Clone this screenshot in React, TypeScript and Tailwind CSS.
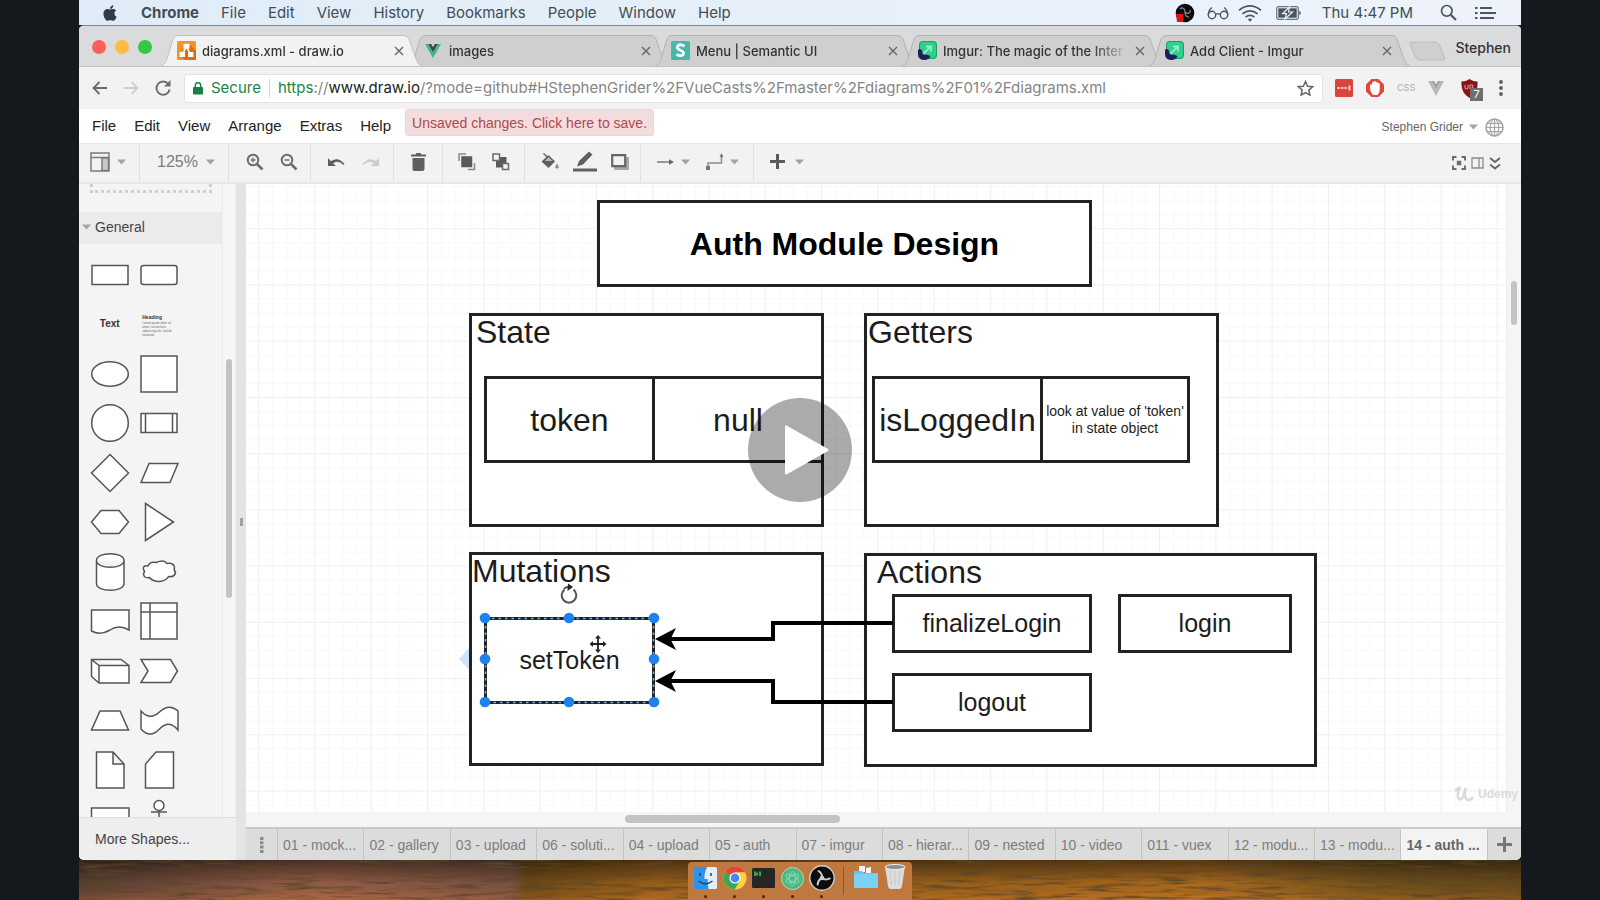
import React from "react";
import { FaApple } from "react-icons/fa";

const ui = "font-['Inter','Roboto',sans-serif]";
const helv = "font-['Liberation_Sans','Arial',sans-serif]";

function Caret({ className = "" }: { className?: string }) {
  return (
    <svg width="9" height="6" viewBox="0 0 9 6" className={className} aria-hidden="true">
      <path d="M0 0.5h9L4.5 5.5z" fill="#a3a3a3" />
    </svg>
  );
}

/* ---------- macOS menu bar ---------- */

function MenuBar() {
  const items = ["File", "Edit", "View", "History", "Bookmarks", "People", "Window", "Help"];
  return (
    <header
      className={`${ui} flex h-[25px] shrink-0 items-center justify-between bg-linear-to-r from-[#dfecf7] to-[#eef3fb] text-[15px] leading-5 text-[#444c55]`}
    >
      <nav aria-label="System menu" className="flex items-center gap-[22px] pl-[22px]">
        <FaApple size={18} color="#2f3b45" />
        <button type="button" className="font-bold">Chrome</button>
        {items.map((i) => (
          <button type="button" key={i}>{i}</button>
        ))}
      </nav>
      <div className="flex items-center pr-[25px]">
        <svg width="20" height="20" viewBox="0 0 20 20" aria-hidden="true">
          <circle cx="10" cy="10" r="9.3" fill="#0b0b0b" />
          <path d="M5 6c2-2 5-1 5 3M15 7c1 3-2 4.500-5 2M10 9c0 3 1 5 4 5" fill="none" stroke="#8d8d8d" strokeWidth="1.200" />
          <path d="M1 11h7v8H2z" fill="#e60f1d" />
        </svg>
        <svg width="22" height="14" viewBox="0 0 22 14" fill="none" stroke="#4d5760" strokeWidth="1.400" className="ml-3" aria-hidden="true">
          <circle cx="5" cy="9" r="3.700" />
          <circle cx="17" cy="9" r="3.700" />
          <path d="M8.700 8.500q2.300-1.800 4.600 0M1.300 9Q1.500 4 5 1.500M20.700 9Q20.500 4 17 1.500" />
        </svg>
        <svg width="24" height="18" viewBox="0 0 24 18" fill="none" stroke="#4d5760" strokeWidth="1.700" className="ml-[9px]" aria-hidden="true">
          <path d="M1 6.300Q12-2.500 23 6.300M4.300 9.800q7.700-6 15.400 0M7.600 13q4.400-3.300 8.800 0" />
          <path d="M9.800 15.300q2.200-1.500 4.400 0L12 17.800z" fill="#4d5760" stroke="none" />
        </svg>
        <svg width="26" height="14" viewBox="0 0 26 14" className="ml-[14px]" aria-hidden="true">
          <rect x="0.700" y="0.700" width="21.600" height="12.600" rx="2" fill="none" stroke="#6a747d" strokeWidth="1.200" />
          <rect x="2.300" y="2.300" width="18.400" height="9.400" fill="#4a545d" />
          <path d="M13.500 1L6.500 7.700h4L9 13l7.500-7h-4z" fill="#4a545d" stroke="#e9f0f8" strokeWidth="1.200" />
          <path d="M23.300 4.500q3 2.500 0 5z" fill="#4d5760" />
        </svg>
        <time className="ml-[20px] text-[15px]">Thu 4:47 PM</time>
        <svg width="17" height="17" viewBox="0 0 17 17" fill="none" stroke="#4d5760" strokeWidth="1.700" className="ml-[27px]" aria-hidden="true">
          <circle cx="6.800" cy="6.800" r="5.300" />
          <path d="M10.700 10.700L16 16" strokeWidth="2.200" />
        </svg>
        <svg width="21" height="14" viewBox="0 0 21 14" stroke="#4d5760" strokeWidth="2" className="ml-[18px]" aria-hidden="true">
          <path d="M5 2h12M5 7h16M5 12h14M0 2h2.500M0 7h2.500M0 12h2.500" />
        </svg>
      </div>
    </header>
  );
}

/* ---------- Browser chrome ---------- */

const DrawioIcon = (
  <svg width="19" height="19" viewBox="0 0 19 19" aria-hidden="true">
    <rect width="19" height="19" rx="1.500" fill="#f0932b" />
    <path d="M12 3l7 7v9H8l-5-4z" fill="#df6c0c" />
    <path d="M9.500 6L5.500 13M9.500 6l4 7" stroke="#fff" strokeWidth="1.500" />
    <rect x="6.500" y="2.800" width="6" height="5" rx="0.500" fill="#fff" />
    <rect x="2.600" y="11" width="5.400" height="5" rx="0.500" fill="#fff" />
    <rect x="11" y="11" width="5.400" height="5" rx="0.500" fill="#fff" />
  </svg>
);
const VueIcon = (
  <svg width="19" height="14" viewBox="-1 0 19 14" aria-hidden="true">
    <path d="M0 0h3.200L8 8.300 12.800 0H16L8 14z" fill="#41b883" />
    <path d="M3.200 0H6.200L8 3.200 9.800 0h3L8 8.300z" fill="#35495e" />
  </svg>
);
const SemanticIcon = (
  <svg width="19" height="19" viewBox="0 0 19 19" aria-hidden="true">
    <rect width="19" height="19" rx="1.500" fill="#45b8ac" />
    <path d="M13.600 5.200Q9.500 2.600 6.900 4.800 4.900 7.400 9.300 9.200q4.600 1.900 2.700 4.600-2.300 2-6.600-.4" fill="none" stroke="#fff" strokeWidth="2.800" />
  </svg>
);
const ImgurIcon = (
  <svg width="19" height="19" viewBox="0 0 19 19" aria-hidden="true">
    <rect x="1" width="18" height="18" rx="4" fill="#2fd08c" />
    <rect x="1.500" y="0.500" width="17" height="17" rx="3.500" fill="none" stroke="#1d9a68" />
    <path d="M0 8.500q3-1.500 4 1l.5 3q1 2 4 1l4 1.500q-1 3.500-5.500 4Q0 19 0 13z" fill="#1f1d5c" />
    <path d="M5.500 12.500l7-6.500M8 5.500h5v5" fill="none" stroke="#8ef0c4" strokeWidth="1.800" />
  </svg>
);

const browserTabs = [
  { title: "diagrams.xml - draw.io", icon: DrawioIcon },
  { title: "images", icon: VueIcon },
  { title: "Menu | Semantic UI", icon: SemanticIcon },
  { title: "Imgur: The magic of the Inter", icon: ImgurIcon },
  { title: "Add Client - Imgur", icon: ImgurIcon },
];

function BrowserTab({ title, icon, active }: { title: string; icon: React.ReactNode; active: boolean }) {
  return (
    <div className={`relative -ml-[14px] flex h-[31px] w-[261px] items-center pr-[18px] pl-4 ${active ? "z-10" : ""}`}>
      <svg className="absolute inset-0 h-full w-full" viewBox="0 0 261 31" preserveAspectRatio="none" aria-hidden="true">
        <path
          d="M0 31C4 30 4 28 6 24L12 4Q13.500 0.500 17 0.500H243Q246.500 0.500 248 4L255 24Q257 30 261 31"
          fill={active ? "#f2f2f2" : "#cfcfcf"}
          stroke={active ? "#c0c0c0" : "#b2b2b2"}
        />
      </svg>
      <button type="button" className="relative flex min-w-0 flex-1 items-center gap-[6px] text-left">
        <span className="shrink-0">{icon}</span>
        <span className="flex-1 mask-r-from-80% mask-r-to-100% text-[13px] leading-5 font-medium whitespace-nowrap text-[#333]">
          {title}
        </span>
      </button>
      <button type="button" aria-label={`Close ${title}`} className="relative ml-[6px]">
        <svg width="10" height="10" viewBox="0 0 10 10" stroke="#666" strokeWidth="1.400">
          <path d="M1 1l8 8M9 1L1 9" />
        </svg>
      </button>
    </div>
  );
}

function TabStrip() {
  return (
    <div className={`${ui} flex h-[41px] shrink-0 items-end border-b border-[#c4c4c4] bg-[#d9dbdc]`}>
      <div className="flex h-full w-[96px] shrink-0 items-center gap-[9px] pt-[2px] pl-[13px]">
        <button type="button" aria-label="Close window" className="size-[14px] rounded-full bg-[#fc605c]" />
        <button type="button" aria-label="Minimise window" className="size-[14px] rounded-full bg-[#fdbc40]" />
        <button type="button" aria-label="Zoom window" className="size-[14px] rounded-full bg-[#34c749]" />
      </div>
      {browserTabs.map((t, i) => (
        <BrowserTab key={i} title={t.title} icon={t.icon} active={i === 0} />
      ))}
      <button type="button" aria-label="New tab" className="-ml-[2px] self-center pt-[10px]">
        <svg width="38" height="20" viewBox="0 0 38 20">
          <path d="M3 1h24q3 0 4.500 3l5 12q1 3-2 3H12q-3 0-4.500-3L2 3Q1.500 1 3 1z" fill="#cfcfcf" stroke="#bdbdbd" />
        </svg>
      </button>
      <button type="button" className="mr-[10px] ml-auto self-center pt-1 text-sm font-medium text-[#333]">Stephen</button>
    </div>
  );
}

function AddressBar() {
  return (
    <div className={`${ui} flex h-[42px] shrink-0 items-center bg-[#f2f2f2] pr-[18px]`}>
      <button type="button" aria-label="Back" className="ml-[13px]">
        <svg width="15" height="14" viewBox="0 0 15 14" fill="none" stroke="#6b6b6b" strokeWidth="1.800"><path d="M15 7H1.500M7.500 1l-6 6 6 6" /></svg>
      </button>
      <button type="button" aria-label="Forward" className="ml-[17px]">
        <svg width="15" height="14" viewBox="0 0 15 14" fill="none" stroke="#cfcfcf" strokeWidth="1.800"><path d="M0 7h13.500M7.500 1l6 6-6 6" /></svg>
      </button>
      <button type="button" aria-label="Reload" className="ml-4">
        <svg width="16" height="16" viewBox="0 0 16 16" fill="none" stroke="#6b6b6b" strokeWidth="1.900">
          <path d="M13.300 4A6.600 6.600 0 1 0 14.600 9.500" />
          <path d="M15.500 0v6.500H9z" fill="#6b6b6b" stroke="none" />
        </svg>
      </button>
      <div className="ml-[13px] flex h-[29px] flex-1 items-center rounded-[3px] border border-[#e2e2e2] bg-white pr-2 pl-2 text-[15px] leading-5">
        <svg width="10" height="13" viewBox="0 0 10 13" aria-hidden="true">
          <rect y="5" width="10" height="7.500" rx="0.800" fill="#1b7f43" />
          <path d="M2.300 5.500V3.500a2.700 2.700 0 0 1 5.400 0v2" fill="none" stroke="#1b7f43" strokeWidth="1.400" />
        </svg>
        <span className="ml-2 text-[#1b8548]">Secure</span>
        <span className="mx-2 h-[18px] w-px bg-[#d5d5d5]" />
        <div role="textbox" aria-label="Address" className="flex-1 whitespace-nowrap text-[#858585]">
          <span className="text-[#1b8548]">https</span>://<span className="text-[#222]">www.draw.io</span>
          /?mode=github#HStephenGrider%2FVueCasts%2Fmaster%2Fdiagrams%2F01%2Fdiagrams.xml
        </div>
        <button type="button" aria-label="Bookmark this page">
          <svg width="17" height="16" viewBox="0 0 17 16" fill="none" stroke="#666" strokeWidth="1.500">
            <path d="M8.500 1.500l2.100 4.700 5 .5-3.800 3.400 1.100 5-4.400-2.600-4.400 2.600 1.100-5L1.400 6.700l5-.5z" />
          </svg>
        </button>
      </div>
      <div className="ml-3 flex items-center gap-[13px]">
        <button type="button" aria-label="Password manager">
          <svg width="18" height="18" viewBox="0 0 18 18"><rect width="18" height="18" rx="1.500" fill="#d8453e" /><path d="M2.500 9h2.300M6 9h2.300M9.500 9h2.300M14.500 6.500v5" stroke="#fff" strokeWidth="1.600" /></svg>
        </button>
        <button type="button" aria-label="Content blocker">
          <svg width="18" height="18" viewBox="0 0 18 18">
            <path d="M5.500 0h7L18 5.500v7L12.500 18h-7L0 12.500v-7z" fill="#e2463c" />
            <path d="M4 6q1-1.500 2 0V3.500q1-1.300 1.800 0V2.500q1-1.200 2 0v1q1-1 2 0v1q1-1 1.900 0V11q0 3-2.500 5H7Q4 13 4 9z" fill="#fff" />
          </svg>
        </button>
        <button type="button" className="w-[18px] text-[9px] leading-4 font-medium text-[#b5b5b5]">CSS</button>
        <button type="button" aria-label="Vue devtools">
          <svg width="16" height="15" viewBox="0 0 16 15"><path d="M0 0h3.200L8 8.300 12.800 0H16L8 15z" fill="#b8b8b8" /><path d="M3.200 0H6.200L8 3.200 9.800 0h3L8 8.300z" fill="#a2a2a2" /></svg>
        </button>
        <button type="button" aria-label="Ad blocker, 7 blocked" className="relative ml-1">
          <svg width="17" height="19" viewBox="0 0 17 19"><path d="M8.500 0Q12 2.500 16.500 2.500 17.500 14 8.500 19-.5 14 .5 2.500 5 2.500 8.500 0z" fill="#8a1518" /><path d="M4 6v3q1.500 2 3 0V6M9 10V6h2.500q1.500 2-1 3" fill="none" stroke="#d98c8c" strokeWidth="1.200" /></svg>
          <span className="absolute top-[9px] left-[9px] h-[13px] w-[13px] bg-[#6e6e6e] text-[11px] leading-[13px] text-white">7</span>
        </button>
        <button type="button" aria-label="Browser menu" className="ml-2">
          <svg width="4" height="16" viewBox="0 0 4 16" fill="#5f5f5f"><circle cx="2" cy="2" r="1.900" /><circle cx="2" cy="8" r="1.900" /><circle cx="2" cy="14" r="1.900" /></svg>
        </button>
      </div>
    </div>
  );
}

/* ---------- draw.io ---------- */

function AppMenu() {
  return (
    <div className="flex h-[34px] shrink-0 items-center bg-white">
      <nav aria-label="Editor menu" className="flex gap-[18px] pl-[13px] text-[15px] leading-5 text-[#222]">
        {["File", "Edit", "View", "Arrange", "Extras", "Help"].map((m) => (
          <button type="button" key={m}>{m}</button>
        ))}
      </nav>
      <button type="button" className="ml-[14px] h-[27px] self-start rounded-[3px] border border-[#f0d2d4] bg-[#f3dcde] px-[6px] text-[14px] leading-5 text-[#b0484c]">
        Unsaved changes. Click here to save.
      </button>
      <button type="button" className="ml-auto flex items-center gap-[6px] pt-[2px] text-[12px] leading-5 text-[#666]">
        Stephen Grider
        <Caret />
      </button>
      <button type="button" aria-label="Language" className="mr-[17px] ml-[7px] pt-[2px]">
        <svg width="19" height="19" viewBox="0 0 19 19" fill="none" stroke="#a6a6a6" strokeWidth="1.200">
          <circle cx="9.500" cy="9.500" r="8.500" strokeWidth="1.600" />
          <ellipse cx="9.500" cy="9.500" rx="4.300" ry="8.500" />
          <path d="M9.500 1v17M1 9.500h17M2.500 5.300h14M2.500 13.700h14" />
        </svg>
      </button>
    </div>
  );
}

function Tool({ label, children, className = "" }: { label: string; children: React.ReactNode; className?: string }) {
  return (
    <button type="button" aria-label={label} className={`flex items-center ${className}`}>
      {children}
    </button>
  );
}

function Magnifier({ plus }: { plus: boolean }) {
  return (
    <svg width="18" height="18" viewBox="0 0 18 18" fill="none" stroke="#6e6e6e">
      <circle cx="7" cy="7" r="5.300" strokeWidth="2" />
      <path d="M11 11l5.500 5.500" strokeWidth="2.600" />
      <path d={plus ? "M4.500 7h5M7 4.500v5" : "M4.500 7h5"} strokeWidth="1.300" />
    </svg>
  );
}

function Toolbar() {
  const group = "flex h-full items-center border-r border-[#e0e0e0] pb-[3px]";
  return (
    <div role="toolbar" className="flex h-[41px] shrink-0 items-center border-t border-b-2 border-t-[#e6e6e6] border-b-[#e6e6e6] bg-[#f2f2f2]">
      <div className={`${group} w-[61px] pl-[11px]`}>
        <Tool label="View layout" className="gap-[7px]">
          <svg width="20" height="20" viewBox="0 0 20 20" fill="none" stroke="#7b7b7b" strokeWidth="1.500">
            <path d="M1 1h18v18H1zM1 5.500h18" /><path d="M12 6h6.500v12.500H12z" fill="#c9c9c9" />
          </svg>
          <Caret />
        </Tool>
      </div>
      <div className={`${group} w-[89px] pl-[17px]`}>
        <button type="button" className="flex items-center gap-2 text-base leading-5 text-[#7d7d7d]">
          125%
          <Caret />
        </button>
      </div>
      <div className={`${group} w-[82px] gap-4 pl-[17px]`}>
        <Tool label="Zoom in"><Magnifier plus /></Tool>
        <Tool label="Zoom out"><Magnifier plus={false} /></Tool>
      </div>
      <div className={`${group} w-[83px] gap-[17px] pl-4`}>
        <Tool label="Undo">
          <svg width="18" height="10" viewBox="0 0 18 10"><path d="M1 1v8h8L6 6.300Q11 2.500 16.500 8L17.500 7Q11-1 4 4.300z" fill="#5f5f5f" /></svg>
        </Tool>
        <Tool label="Redo">
          <svg width="18" height="10" viewBox="0 0 18 10"><path d="M17 1v8H9l3-2.700Q7 2.500 1.500 8L.5 7Q7-1 14 4.300z" fill="#cbcbcb" /></svg>
        </Tool>
      </div>
      <div className={`${group} w-[49px] justify-center`}>
        <Tool label="Delete">
          <svg width="15" height="18" viewBox="0 0 15 18" fill="#5f5f5f"><path d="M0 1.500h4.500L5.500 0h4l1 1.500H15V3.500H0zM1.500 5h12v11q0 2-2 2h-8q-2 0-2-2z" /></svg>
        </Tool>
      </div>
      <div className={`${group} w-[82px] gap-4 pl-[15px]`}>
        <Tool label="To front">
          <svg width="18" height="18" viewBox="0 0 18 18" fill="none" stroke="#8a8a8a" strokeWidth="1.500"><path d="M1 8V1h7M10 16.500h6.500V10" /><path d="M4 4h9.500v9.500H4z" fill="#5a5a5a" stroke="#5a5a5a" /></svg>
        </Tool>
        <Tool label="To back">
          <svg width="18" height="18" viewBox="0 0 18 18" strokeWidth="1.500"><path d="M4 4h10.500v10.500H4z" fill="#5a5a5a" /><path d="M1 1h6.500v6.500H1zM10.500 10.500h6v6h-6z" fill="#f2f2f2" stroke="#6b6b6b" /></svg>
        </Tool>
      </div>
      <div className={`${group} w-[116px] gap-[14px] pl-4`}>
        <Tool label="Fill colour">
          <svg width="18" height="17" viewBox="0 0 18 17"><path d="M2.500 0.500l6 5.500" stroke="#666" strokeWidth="1.400" /><path d="M7.500 2l6.500 6.500L7.500 15 .5 8.500z" fill="#5f5f5f" /><path d="M7.500 4L4 8h7.500z" fill="#b9b9b9" /><path d="M16 10.500q3.300 5 0 5t0-5z" fill="#8d8d8d" /></svg>
        </Tool>
        <Tool label="Line colour">
          <svg width="24" height="21" viewBox="0 0 24 21" fill="#606060"><path d="M0 17.500h24v3H0zM4 15.500l2-5.500L16 .5l3.500 3L10 13.500z" /></svg>
        </Tool>
        <Tool label="Shadow">
          <svg width="18" height="16" viewBox="0 0 18 16"><path d="M3 3h15v13H3z" fill="#a9a9a9" /><path d="M1.200 1.200h13v11h-13z" fill="#f2f2f2" stroke="#666" strokeWidth="2.200" /></svg>
        </Tool>
      </div>
      <div className={`${group} w-[113px] gap-4 pl-4`}>
        <Tool label="Connection" className="gap-[7px]">
          <svg width="17" height="8" viewBox="0 0 17 8"><path d="M0 4h13" stroke="#777" strokeWidth="1.400" /><path d="M12 1.200L17 4l-5 2.800z" fill="#666" /></svg>
          <Caret />
        </Tool>
        <Tool label="Waypoints" className="gap-[6px]">
          <svg width="18" height="18" viewBox="0 0 18 18"><path d="M2 16v-6h13.500V3" fill="none" stroke="#8a8a8a" strokeWidth="1.500" /><path d="M0 13h4v4H0zM13.500 4l2-4 2 4z" fill="#777" /></svg>
          <Caret />
        </Tool>
      </div>
      <Tool label="Insert" className="ml-4 gap-[10px] pb-[3px]">
        <svg width="15" height="15" viewBox="0 0 15 15" stroke="#5a5a5a" strokeWidth="3"><path d="M0 7.500h15M7.500 0v15" /></svg>
        <Caret />
      </Tool>
      <div className="mr-5 ml-auto flex items-center gap-[5px]">
        <Tool label="Fullscreen">
          <svg width="14" height="14" viewBox="0 0 14 14" fill="none" stroke="#6b6b6b" strokeWidth="2"><path d="M1 4.500V1h3.500M9.500 1H13v3.500M13 9.500V13H9.500M4.500 13H1V9.500" /><path d="M4.800 4.800h4.400v4.400H4.800z" fill="#6b6b6b" stroke="none" /></svg>
        </Tool>
        <Tool label="Format panel">
          <svg width="13" height="12" viewBox="0 0 13 12" fill="none" stroke="#8a8a8a" strokeWidth="1.300"><path d="M1 1h11v10H1zM8 1v10" /></svg>
        </Tool>
        <Tool label="Collapse">
          <svg width="12" height="13" viewBox="0 0 12 13" fill="none" stroke="#666" strokeWidth="1.800"><path d="M1 1l5 4 5-4M1 7.500l5 4 5-4" /></svg>
        </Tool>
      </div>
    </div>
  );
}

/* Palette outlines, each drawn in a 40x40 box. */
const paletteShapes: { name: string; draw: React.ReactNode }[] = [
  { name: "Rectangle", draw: <rect x="2" y="10.500" width="36" height="19" /> },
  { name: "Rounded rectangle", draw: <rect x="2" y="10.500" width="36" height="19" rx="2.500" /> },
  { name: "Text", draw: null },
  { name: "Textbox", draw: null },
  { name: "Ellipse", draw: <ellipse cx="20" cy="20" rx="18.300" ry="12.300" /> },
  { name: "Square", draw: <rect x="2" y="2" width="36" height="36" /> },
  { name: "Circle", draw: <circle cx="20" cy="20" r="18.300" /> },
  { name: "Process", draw: <path d="M2 10.500h36v19H2zM6.500 10.500v19M33.500 10.500v19" /> },
  { name: "Diamond", draw: <path d="M20 1.500L38.500 20 20 38.500 1.500 20z" /> },
  { name: "Parallelogram", draw: <path d="M10 10.500h29L31 29.500H2z" /> },
  { name: "Hexagon", draw: <path d="M11 8.500h18L38.500 20 29 31.500H11L1.500 20z" /> },
  { name: "Triangle", draw: <path d="M6.500 1.500L34.500 20l-28 18.500z" /> },
  { name: "Cylinder", draw: <path d="M6.500 8.500c0-9 27.500-9 27.500 0v23c0 9-27.500 9-27.500 0zc0 9 27.500 9 27.500 0" /> },
  { name: "Cloud", draw: <path d="M9 14q2-5 8-3.500 8-3.500 11 1 7-1 7.500 4-1 2 1 5-1 5-7 4-2 4-9 5-7 0-10-4-6 1-6-4 2-2 0-4-1-4.500 4.500-3.500z" /> },
  { name: "Document", draw: <path d="M1.500 9h37.500v20q-10-6-19 0-10 6-18.500 1z" /> },
  { name: "Internal storage", draw: <path d="M2 2h36v36H2zM2 11h36M11 2v36" /> },
  { name: "Cube", draw: <path d="M1.500 8.500H31L39 14.500V32H9L1.500 25.500zL9 14.500h30M9 14.500V32" /> },
  { name: "Step", draw: <path d="M2 8.500h29.500L38.500 20l-7 11.500H2L9 20z" /> },
  { name: "Trapezoid", draw: <path d="M10 11h20l8.500 19h-37z" /> },
  { name: "Tape", draw: <path d="M2 11q9 10 18.500 1t18.500-1v19q-9-11-18.500-1T2 29z" /> },
  { name: "Note", draw: <path d="M6.500 2H23l11 12v24H6.500zM23 2v12h11" /> },
  { name: "Card", draw: <path d="M17 2h17.500v36H6.500V14z" /> },
  { name: "Callout", draw: <path d="M1.500 9h37.500v20H1.500z" /> },
  { name: "Actor", draw: <path d="M12 13h16M20 11.500V28l-8 10M20 28l8 10M15 6.500a5 5 0 1 0 10 0a5 5 0 1 0-10 0" /> },
];

function Palette() {
  return (
    <aside className="flex w-[157px] shrink-0 flex-col bg-[#f4f4f4]">
      <div className="flex min-h-0 flex-1">
        <div className="flex-1 overflow-hidden">
          <div className="mr-[10px] ml-[11px] h-[9px] border-3 border-t-0 border-dotted border-[#cfcfcf]" />
          <button type="button" className="mt-[19px] flex h-8 w-full items-center gap-[4px] bg-[#ebebeb] pb-[2px] pl-[3px] text-sm leading-5 text-[#444]">
            <Caret />
            General
          </button>
          <div className="mt-[6px] ml-[6px] grid h-[594px] w-[99px] auto-rows-fr grid-cols-2">
            {paletteShapes.map((s) => (
              <button type="button" key={s.name} aria-label={s.name} className="flex items-center justify-center">
                {s.name === "Text" ? (
                  <span className="text-[10px] leading-4 font-bold text-[#333]">Text</span>
                ) : s.name === "Textbox" ? (
                  <span className="flex h-5 w-[34px] flex-col gap-px text-left">
                    <span className="text-[5px] leading-[6px] font-bold text-[#333]">Heading</span>
                    <span className="text-[3px] leading-[4px] text-[#666]">Lorem ipsum dolor sit amet, consectetur adipisicing elit, sed do eiusmod</span>
                  </span>
                ) : (
                  <svg width="40" height="40" viewBox="0 0 40 40" fill="#fff" stroke="#555" strokeWidth="1.500">{s.draw}</svg>
                )}
              </button>
            ))}
          </div>
        </div>
        <div className="w-[14px] border-x border-[#ececec] bg-[#f6f6f6] px-[3px] pt-[175px]">
          <div className="h-[239px] rounded-full bg-[#c3c3c3]" />
        </div>
      </div>
      <button type="button" className="h-[43px] shrink-0 border-t border-[#dedede] bg-[#eeeeee] pl-4 text-left text-sm leading-5 text-[#444]">
        More Shapes...
      </button>
    </aside>
  );
}

function Node({ className, children }: { className: string; children?: React.ReactNode }) {
  return (
    <div className={`absolute flex border-3 border-[#222] bg-white text-center text-[#1c1c1c] ${className}`}>{children}</div>
  );
}

const handles = [
  [239, 434], [323, 434], [408, 434], [239, 475], [408, 475], [239, 518], [323, 518], [408, 518],
];

function Canvas() {
  const box = "items-center justify-center";
  const title = "items-start leading-8 text-[32px]";
  return (
    <div className="relative min-w-0 flex-1 overflow-hidden bg-white">
      <svg className="absolute inset-0 h-full w-full" aria-hidden="true">
        <defs>
          <pattern id="grid" x="12.200" y="44.200" width="56.300" height="56.230" patternUnits="userSpaceOnUse">
            <path d="M14.500 0v56.300M28.600 0v56.300M42.700 0v56.300M0 14.500h56.300M0 28.600h56.300M0 42.700h56.300" stroke="#f8f8f8" />
            <path d="M0.500 0v56.300M0 0.500h56.300" stroke="#efefef" />
          </pattern>
        </defs>
        <rect width="100%" height="100%" fill="url(#grid)" />
        <path d="M213 475l11-12v24z" fill="#cfe3fb" />
      </svg>

      <Node className={`top-[16px] left-[351px] h-[87px] w-[495px] text-[32px] font-bold text-black ${box}`}>Auth Module Design</Node>

      <Node className={`top-[129px] left-[223px] h-[214px] w-[355px] pl-1 ${title}`}>State</Node>
      <Node className={`top-[192px] left-[238px] h-[87px] w-[171px] text-[32px] ${box}`}>token</Node>
      <Node className={`top-[192px] left-[406px] h-[87px] w-[172px] text-[32px] ${box}`}>null</Node>

      <Node className={`top-[129px] left-[618px] h-[214px] w-[355px] pl-px ${title}`}>Getters</Node>
      <Node className={`top-[192px] left-[626px] h-[87px] w-[171px] text-[32px] ${box}`}>isLoggedIn</Node>
      <Node className={`top-[192px] left-[794px] h-[87px] w-[150px] text-[14px] leading-[17px] ${box}`}>
        look at value of 'token'<br />in state object
      </Node>

      <Node className={`top-[368px] left-[223px] h-[214px] w-[355px] ${title}`}>Mutations</Node>
      <Node className={`top-[369px] left-[618px] h-[214px] w-[453px] pl-[10px] ${title}`}>Actions</Node>
      <Node className={`top-[410px] left-[646px] h-[59px] w-[200px] pt-px text-[25px] ${box}`}>finalizeLogin</Node>
      <Node className={`top-[410px] left-[872px] h-[59px] w-[174px] pt-px text-[25px] ${box}`}>login</Node>
      <Node className={`top-[489px] left-[646px] h-[59px] w-[200px] pt-px text-[25px] ${box}`}>logout</Node>
      <Node className={`top-[433px] left-[238px] h-[87px] w-[171px] pt-px text-[25px] ${box}`}>setToken</Node>

      <svg className="pointer-events-none absolute inset-0 h-full w-full" fill="none" aria-hidden="true">
        <g stroke="#000" strokeWidth="4">
          <path d="M647 439H527V455H424" />
          <path d="M647 518H527V497H424" />
        </g>
        <path d="M409 455l21-11-5.500 11 5.500 11zM409 497l21-11-5.500 11 5.500 11z" fill="#000" />
        <path d="M239.500 434.500h168v84h-168z" stroke="#6cb4ee" strokeWidth="1.600" strokeDasharray="2.500 4" />
        {handles.map(([x, y]) => (
          <circle key={`${x}-${y}`} cx={x} cy={y} r="5.300" fill="#1c82ee" />
        ))}
        <g stroke="#555" strokeWidth="2">
          <path d="M327.500 405.600a7.300 7.300 0 1 1-9 0" />
          <path d="M318 405q2-2.500 5-2" />
          <path d="M322 399.500l5 3.500-5.500 4z" fill="#222" stroke="none" />
        </g>
        <g stroke="#222" strokeWidth="1.800">
          <path d="M345 460h14M352 453v14" />
          <path d="M352 451l3 3.500h-6zM352 469l3-3.500h-6zM343.500 460l3.500-3v6zM360.500 460l-3.500-3v6z" fill="#222" stroke="none" />
        </g>
      </svg>
    </div>
  );
}

function Watermark() {
  return (
    <div className="absolute right-[3px] bottom-[8px] flex items-center gap-1 text-[#dadada]">
      <svg width="20" height="20" viewBox="0 0 20 20" fill="none" stroke="#d9d9d9" strokeWidth="2.500" aria-hidden="true">
        <path d="M1 7l5-4Q3 8 4 13q2 5 5 0l3-9M11 4q-1 12 3 12 3 0 5-3" />
      </svg>
      <span className="text-[12px] leading-4 font-bold">Udemy</span>
    </div>
  );
}

const pages = [
  "01 - mock...", "02 - gallery", "03 - upload", "06 - soluti...", "04 - upload", "05 - auth", "07 - imgur",
  "08 - hierar...", "09 - nested", "10 - video", "011 - vuex", "12 - modu...", "13 - modu...", "14 - auth ...",
];

function PageTabs() {
  return (
    <div className="flex h-[33px] shrink-0 border-t-2 border-[#c9c9c9] bg-[#dcdcdc]">
      <button type="button" aria-label="Pages" className="flex w-[32px] items-center justify-center border-r border-[#c2c2c2]">
        <svg width="4" height="16" viewBox="0 0 4 16" fill="#8a8a8a"><path d="M0 0h3.500v3H0zM0 4.300h3.500v3H0zM0 8.600h3.500v3H0zM0 12.900h3.500v3H0z" /></svg>
      </button>
      {pages.map((p, i) => (
        <button
          type="button"
          key={p}
          className={`min-w-0 flex-1 overflow-hidden border-r border-[#c2c2c2] pl-[5px] text-left text-sm leading-5 whitespace-nowrap ${
            i === pages.length - 1 ? "bg-[#f3f3f3] font-bold text-[#666]" : "text-[#7c7c7c]"
          }`}
        >
          {p}
        </button>
      ))}
      <button type="button" aria-label="Insert page" className="flex w-[33px] items-center justify-center">
        <svg width="15" height="15" viewBox="0 0 15 15" stroke="#777" strokeWidth="3"><path d="M0 7.500h15M7.500 0v15" /></svg>
      </button>
    </div>
  );
}

/* ---------- Dock ---------- */

const dockApps: { name: string; icon: React.ReactNode }[] = [
  {
    name: "Finder",
    icon: (
      <svg width="23" height="22" viewBox="0 0 23 22">
        <rect width="23" height="22" rx="1.500" fill="#e3edf7" />
        <path d="M0 0h13Q10 7 10.500 12h3q0 5 1 10H0z" fill="#2d92ea" />
        <path d="M6 6v3M17 6v3M4.500 14q7 5.500 14 0" fill="none" stroke="#17456f" strokeWidth="1.500" />
      </svg>
    ),
  },
  {
    name: "Chrome",
    icon: (
      <svg width="24" height="24" viewBox="0 0 24 24">
        <circle cx="12" cy="12" r="11.500" fill="#fcd03f" />
        <path d="M12 12L2 6.200A11.500 11.500 0 0 1 22 6.200H12z" fill="#e2463a" />
        <path d="M12 12L2 6.200A11.500 11.500 0 0 0 11.500 23.500L17 14.500z" fill="#3aa757" />
        <circle cx="12" cy="12" r="5.600" fill="#fff" />
        <circle cx="12" cy="12" r="4.400" fill="#4688f1" />
      </svg>
    ),
  },
  {
    name: "Terminal",
    icon: (
      <svg width="23" height="20" viewBox="0 0 23 20">
        <rect width="23" height="20" rx="1.500" fill="#262626" />
        <path d="M3 3.500v4.500M5 4.500v3M8 3.500v4.500" stroke="#2cc13a" strokeWidth="1.800" />
      </svg>
    ),
  },
  {
    name: "Atom",
    icon: (
      <svg width="23" height="23" viewBox="0 0 23 23" fill="none">
        <circle cx="11.500" cy="11.500" r="11" fill="#4fb985" stroke="#a8dcc2" />
        <g stroke="#8fd9b5" strokeWidth="1">
          <ellipse cx="11.500" cy="11.500" rx="3" ry="7" />
          <ellipse cx="11.500" cy="11.500" rx="3" ry="7" transform="rotate(60 11.500 11.500)" />
          <ellipse cx="11.500" cy="11.500" rx="3" ry="7" transform="rotate(120 11.500 11.500)" />
        </g>
      </svg>
    ),
  },
  {
    name: "OBS",
    icon: (
      <svg width="26" height="26" viewBox="0 0 26 26" fill="none">
        <circle cx="13" cy="13" r="12.200" fill="#0c0c0c" stroke="#cfcfcf" strokeWidth="1.400" />
        <g stroke="#cdcdcd" strokeWidth="2" strokeLinecap="round">
          <path d="M13 13Q13.500 8.500 9.500 6" />
          <path d="M13 13Q13.500 8.500 9.500 6" transform="rotate(120 13 13)" />
          <path d="M13 13Q13.500 8.500 9.500 6" transform="rotate(240 13 13)" />
        </g>
        <circle cx="13" cy="13" r="2.300" fill="#cdcdcd" />
      </svg>
    ),
  },
];

function Dock() {
  return (
    <div className="relative flex h-10 shrink-0 justify-center overflow-hidden">
      <svg className="absolute inset-0 h-full w-full" preserveAspectRatio="none" viewBox="0 0 1442 40" aria-hidden="true">
        <defs>
          <linearGradient id="sea">
            <stop offset="0" stopColor="#5d443a" />
            <stop offset="0.070" stopColor="#7d5242" />
            <stop offset="0.160" stopColor="#a4674f" />
            <stop offset="0.300" stopColor="#85594a" />
            <stop offset="0.310" stopColor="#7a5014" />
            <stop offset="0.400" stopColor="#a8691c" />
            <stop offset="0.600" stopColor="#a86a1c" />
            <stop offset="0.780" stopColor="#bb7420" />
            <stop offset="0.900" stopColor="#7c5a1c" />
            <stop offset="1" stopColor="#71501c" />
          </linearGradient>
          <linearGradient id="shade" x2="0" y2="1">
            <stop offset="0" stopColor="#0d0805" stopOpacity="0.600" />
            <stop offset="0.600" stopColor="#0d0805" stopOpacity="0.100" />
            <stop offset="1" stopColor="#e8742c" stopOpacity="0.250" />
          </linearGradient>
          <filter id="ripple" x="0" y="0" width="100%" height="100%">
            <feTurbulence type="fractalNoise" baseFrequency="0.025 0.300" numOctaves="4" seed="7" />
            <feColorMatrix values="0 0 0 0 0.100  0 0 0 0 0.060  0 0 0 0 0.020  2.600 0 0 0 -1.200" />
          </filter>
        </defs>
        <rect width="1442" height="40" fill="url(#sea)" />
        <rect width="1442" height="40" fill="url(#shade)" />
        <rect width="1442" height="40" filter="url(#ripple)" />
      </svg>
      <div className="relative mt-[2px] flex items-center gap-[6px] rounded-t-[4px] bg-[#bf7840] px-[6px]">
        {dockApps.map((a) => (
          <button type="button" key={a.name} aria-label={a.name} className="flex h-full w-[23px] flex-col items-center justify-between pt-1 pb-[2px]">
            <span className="flex h-6 items-center">{a.icon}</span>
            <span className="size-[3px] rounded-full bg-[#5a1f0a]" />
          </button>
        ))}
        <span className="mx-[4px] h-7 w-px bg-[#8e5529]" />
        <button type="button" aria-label="Documents" className="h-full pb-[9px]">
          <svg width="24" height="24" viewBox="0 0 24 24">
            <path d="M5 1h6v6H5zM12 3l5-1v6h-5z" fill="#f4f4f4" />
            <path d="M0 6h8l2 2h14v15H0z" fill="#69c5ef" />
            <path d="M0 9h24v14H0z" fill="#7ad0f5" />
          </svg>
        </button>
        <button type="button" aria-label="Trash" className="h-full pb-[9px]">
          <svg width="22" height="25" viewBox="0 0 22 25">
            <path d="M1 2h20l-3 20q-.500 3-3 3H7q-2.500 0-3-3z" fill="#dcdcdc" />
            <path d="M6 6l1.500 15M16 6l-1.500 15M11 6v15" stroke="#c9c9c9" />
            <ellipse cx="11" cy="3" rx="10" ry="2.500" fill="#8f8f8f" stroke="#f1f1f1" />
          </svg>
        </button>
      </div>
    </div>
  );
}

export default function App() {
  return (
    <div className={`${helv} relative flex h-screen flex-col bg-[#15191e] px-[79px]`}>
      <MenuBar />
      <main className="flex min-h-0 flex-1 flex-col overflow-hidden rounded-[5px] border-t border-[#7f8890] bg-[#f2f2f2]">
        <TabStrip />
        <AddressBar />
        <AppMenu />
        <Toolbar />
        <div className="flex min-h-0 flex-1">
          <Palette />
          <div className="flex w-[10px] shrink-0 items-center justify-end bg-[#e4e4e4] pr-[3px]">
            <span className="h-2 w-[3px] bg-[#a0a0a0]" />
          </div>
          <div className="flex min-w-0 flex-1 flex-col">
            <div className="relative flex min-h-0 flex-1">
              <Canvas />
              <div className="w-[15px] shrink-0 border-l border-[#ebebeb] bg-[#f5f5f5] px-1 pt-[97px]">
                <div className="h-11 rounded-full bg-[#c3c3c3]" />
              </div>
              <Watermark />
            </div>
            <div className="h-[15px] shrink-0 bg-[#f5f5f5] px-[379px] pt-[3px]">
              <div className="h-2 w-[215px] rounded-full bg-[#c3c3c3]" />
            </div>
            <PageTabs />
          </div>
        </div>
      </main>
      <Dock />
      <button
        type="button"
        aria-label="Play video"
        className="absolute top-1/2 left-1/2 z-20 flex size-[104px] -translate-1/2 items-center justify-center rounded-full bg-black/33"
      >
        <svg width="44" height="50" viewBox="0 0 44 50" className="ml-[14px]" aria-hidden="true">
          <path d="M0 1.500Q0 0 1.500 0.600L43 24q1 1 0 2L1.500 49.400Q0 50 0 48.500z" fill="#fff" />
        </svg>
      </button>
    </div>
  );
}
